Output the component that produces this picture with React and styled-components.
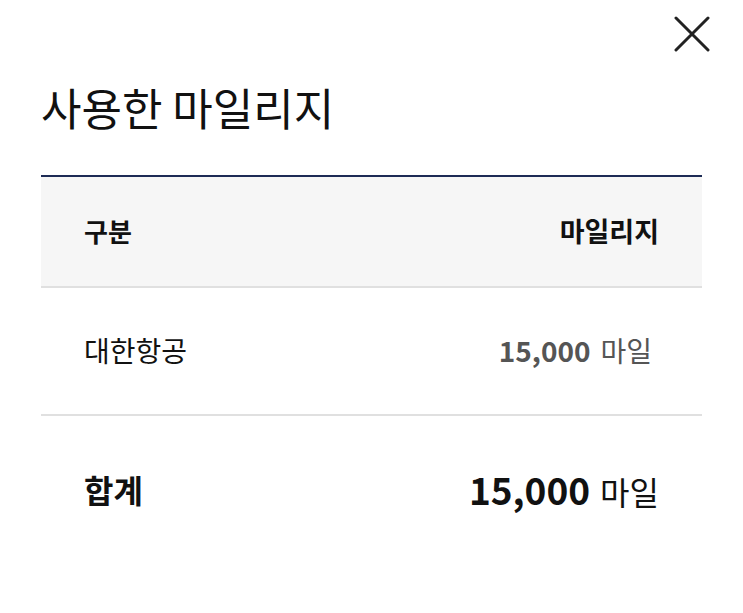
import React from 'react';
import styled, { createGlobalStyle } from 'styled-components';

const GlobalStyle = createGlobalStyle`
  html, body {
    margin: 0;
    padding: 0;
    background: #fff;
  }
  body {
    font-family: 'Noto Sans CJK KR', 'Noto Sans', sans-serif;
    color: #111;
  }
`;

const Sheet = styled.div`
  width: 743px;
  height: 613px;
  padding: 14px 41px 0;
  box-sizing: border-box;
`;

const TopBar = styled.div`
  display: flex;
  justify-content: flex-end;
  margin-right: -10px;
`;

const CloseButton = styled.button`
  width: 40px;
  height: 40px;
  padding: 0;
  border: 0;
  background: none;
  display: flex;
  align-items: center;
  justify-content: center;
  svg {
    display: block;
  }
`;

const Title = styled.h2`
  margin: 23px 0 0;
  font-size: 44px;
  font-weight: 400;
  line-height: 60px;
  color: #111;
`;

const Table = styled.div`
  margin-top: 38px;
  border-top: 2px solid #1d2b55;
`;

const Row = styled.div`
  display: flex;
  align-items: center;
  justify-content: space-between;
  height: ${(p) => p.height}px;
  padding: 0 ${(p) => p.padRight || 43}px ${(p) => p.lift || 0}px 43px;
  background: ${(p) => (p.head ? '#f6f6f6' : '#fff')};
  border-bottom: ${(p) => (p.last ? 'none' : '2px solid #e0e0e0')};
  box-sizing: border-box;
`;

const Label = styled.span`
  font-size: ${(p) => p.size}px;
  font-weight: ${(p) => (p.bold ? 700 : 400)};
  color: #111;
`;

const Amount = styled.span`
  display: flex;
  align-items: baseline;
  gap: 10px;
  color: ${(p) => p.color};
`;

const Num = styled.span`
  font-size: ${(p) => p.size}px;
  font-weight: 700;
`;

const Unit = styled.span`
  font-size: ${(p) => p.size}px;
  font-weight: 400;
`;

const CloseIcon = () => (
  <svg width="36" height="36" viewBox="0 0 36 36">
    <path d="M2 2 L34 34 M34 2 L2 34" stroke="#222" strokeWidth="3" strokeLinecap="round" />
  </svg>
);

export default function App() {
  return (
    <Sheet>
      <GlobalStyle />
      <TopBar>
        <CloseButton aria-label="닫기">
          <CloseIcon />
        </CloseButton>
      </TopBar>
      <Title>사용한 마일리지</Title>
      <Table>
        <Row head height={111} lift={2}>
          <Label size={26} bold>구분</Label>
          <Label size={27} bold>마일리지</Label>
        </Row>
        <Row height={128} padRight={50} lift={2}>
          <Label size={28}>대한항공</Label>
          <Amount color="#555">
            <Num size={28}>15,000</Num>
            <Unit size={28}>마일</Unit>
          </Amount>
        </Row>
        <Row last height={146}>
          <Label size={32} bold>합계</Label>
          <Amount color="#111">
            <Num size={37}>15,000</Num>
            <Unit size={32}>마일</Unit>
          </Amount>
        </Row>
      </Table>
    </Sheet>
  );
}
